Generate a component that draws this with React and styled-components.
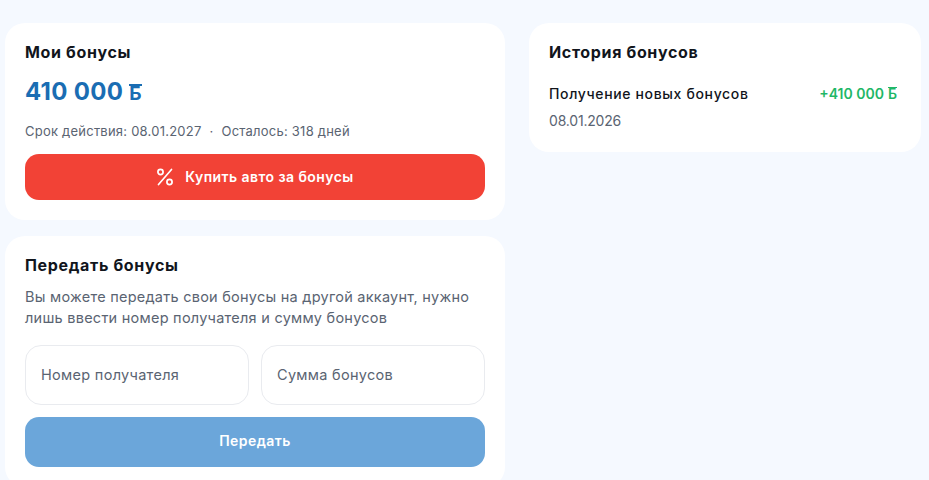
import React from "react";
import styled, { createGlobalStyle } from "styled-components";

const Global = createGlobalStyle`
  html, body { margin: 0; padding: 0; height: 480px; overflow: hidden; background: #f5f9ff; }
  * { box-sizing: border-box; }
  body { font-family: Inter, "Noto Sans", sans-serif; }
`;

const Page = styled.div`
  display: grid;
  grid-template-columns: 500px 392px;
  column-gap: 24px;
  align-items: start;
  padding: 23px 8px 0 5px;
  height: 480px;
  overflow: hidden;
`;
const Column = styled.div`
  display: flex;
  flex-direction: column;
  gap: 16px;
`;
const Card = styled.section`
  background: #fff;
  border-radius: 20px;
  padding: 19px 20px ${(p) => p.$bottom || 20}px;
`;
const Title = styled.h2`
  margin: 0;
  font-size: 16px;
  line-height: 20px;
  font-weight: 700;
  letter-spacing: 0.65px;
  color: #11151c;
`;
const Amount = styled.div`
  margin-top: 15px;
  font-size: 24px;
  line-height: 30px;
  font-weight: 700;
  letter-spacing: 0.3px;
  color: #1a6db3;
`;
const Bonus = styled.span`
  position: relative;
  display: inline-block;
  margin-left: ${(p) => p.$gap}px;
  font-size: ${(p) => p.$size}px;
  &::before {
    content: "";
    position: absolute;
    left: 0;
    right: 0;
    top: ${(p) => p.$top}px;
    height: ${(p) => p.$bar}px;
    background: currentColor;
  }
`;
const Meta = styled.div`
  display: flex;
  gap: 8px;
  margin-top: 13px;
  font-size: 13px;
  line-height: 18px;
  letter-spacing: 0.23px;
  color: #5a6472;
`;
const Action = styled.button`
  display: flex;
  align-items: center;
  justify-content: center;
  gap: 11px;
  width: 100%;
  border: 0;
  padding: 0 0 ${(p) => p.$lift || 0}px;
  border-radius: 14px;
  height: ${(p) => p.$h}px;
  margin-top: ${(p) => p.$top}px;
  background: ${(p) => p.$bg};
  color: #fff;
  font: 600 14px/20px Inter, "Noto Sans", sans-serif;
  letter-spacing: 0.43px;
`;
const Text = styled.p`
  margin: 11px 0 0;
  font-size: 14.5px;
  line-height: 21px;
  letter-spacing: 0.25px;
  color: #5a6472;
`;
const Fields = styled.div`
  display: grid;
  grid-template-columns: 1fr 1fr;
  gap: 12px;
  margin-top: 17px;
`;
const Field = styled.div`
  display: flex;
  align-items: center;
  height: 60px;
  padding: 0 15px 2px;
  border: 1px solid #e9ebef;
  border-radius: 16px;
  font-size: 14.5px;
  letter-spacing: 0.3px;
  color: #5a6472;
`;
const HistoryRow = styled.div`
  display: flex;
  justify-content: space-between;
  align-items: center;
  margin-top: 23px;
  padding-right: 4px;
  font-size: 14px;
  line-height: 18px;
  font-weight: 500;
  letter-spacing: 0.65px;
  color: #11151c;
`;
const Plus = styled.span`
  font-weight: 600;
  letter-spacing: 0;
  color: #1fb767;
`;
const DateText = styled.div`
  margin-top: 9px;
  font-size: 14px;
  line-height: 18px;
  letter-spacing: -0.2px;
  color: #5a6472;
`;

export default function App() {
  return (
    <>
      <Global />
      <Page>
        <Column>
          <Card>
            <Title>Мои бонусы</Title>
            <Amount>
              410 000<Bonus $gap={6} $size={19} $top={5} $bar={2}>Б</Bonus>
            </Amount>
            <Meta>
              <span>Срок действия: 08.01.2027</span>
              <span>·</span>
              <span>Осталось: 318 дней</span>
            </Meta>
            <Action $h={46} $top={14} $bg="#f24236">
              <svg width="18" height="18" viewBox="0 0 18 18" fill="none" stroke="#fff" strokeWidth="1.7" strokeLinecap="round">
                <path d="M15.5 1.5 2.5 16.5" />
                <circle cx="4.5" cy="4" r="2.6" />
                <circle cx="13.5" cy="14" r="2.6" />
              </svg>
              Купить авто за бонусы
            </Action>
          </Card>
          <Card>
            <Title>Передать бонусы</Title>
            <Text>
              Вы можете передать свои бонусы на другой аккаунт, нужно
              <br />
              лишь ввести номер получателя и сумму бонусов
            </Text>
            <Fields>
              <Field>Номер получателя</Field>
              <Field>Сумма бонусов</Field>
            </Fields>
            <Action $h={50} $top={12} $bg="#6ba6da" $lift={2}>Передать</Action>
          </Card>
        </Column>
        <Column>
          <Card $bottom={22}>
            <Title>История бонусов</Title>
            <HistoryRow>
              <span>Получение новых бонусов</span>
              <Plus>+410 000<Bonus $gap={4} $size={14} $top={2} $bar={1}>Б</Bonus></Plus>
            </HistoryRow>
            <DateText>08.01.2026</DateText>
          </Card>
        </Column>
      </Page>
    </>
  );
}
